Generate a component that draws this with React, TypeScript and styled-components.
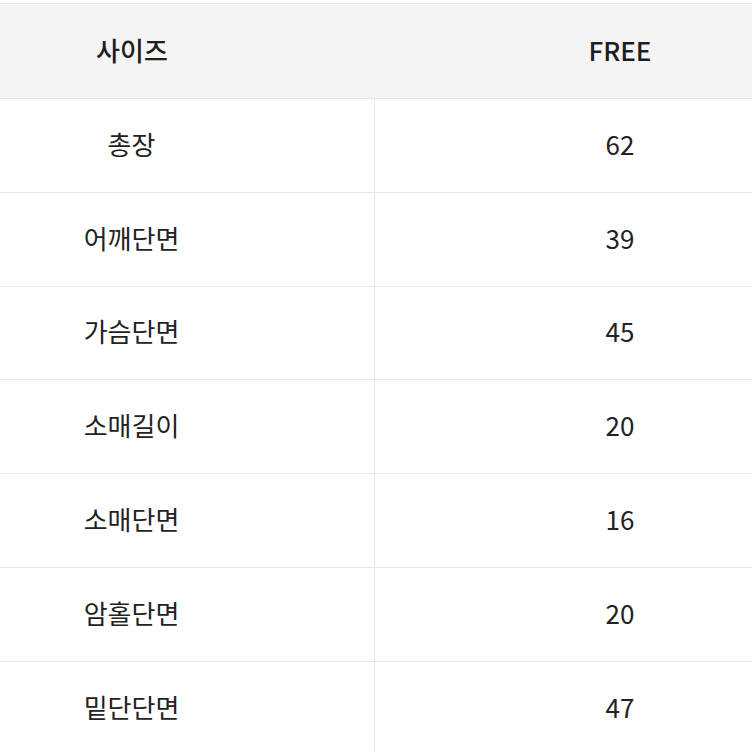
import React from 'react'
import styled, {createGlobalStyle} from 'styled-components'

const rows = [
    {label: '총장', value: '62'},
    {label: '어깨단면', value: '39'},
    {label: '가슴단면', value: '45'},
    {label: '소매길이', value: '20'},
    {label: '소매단면', value: '16'},
    {label: '암홀단면', value: '20'},
    {label: '밑단단면', value: '47'},
]

const GlobalStyle = createGlobalStyle`
  body {
    margin: 0;
    background: #fff;
    overflow: hidden;
    font-family: "Noto Sans CJK KR", "Noto Sans", sans-serif;
    color: #222;
  }
`

export default function App() {
    return (
        <>
            <GlobalStyle/>
            <Page>
                <Table>
                    <HeadRow>
                        <HeadCell>사이즈</HeadCell>
                        <HeadCell>FREE</HeadCell>
                    </HeadRow>
                    {rows.map((row, index) =>
                        <Row key={index}>
                            <LabelCell>{row.label}</LabelCell>
                            <ValueCell>{row.value}</ValueCell>
                        </Row>
                    )}
                </Table>
            </Page>
        </>
    )
}

const Page = styled.div`
  padding-top: 3px;
  height: 752px;
  overflow: hidden;
`

const Table = styled.div`
  width: 976px;
  margin-left: -111px;
  border-top: 1px solid #e4e4e4;
`

const HeadRow = styled.div`
  display: grid;
  grid-template-columns: 486px 1fr;
  height: 94px;
  background: #f4f4f4;
  border-bottom: 1.5px solid #e6e6e6;
`

const HeadCell = styled.div`
  display: flex;
  align-items: center;
  justify-content: center;
  padding-bottom: 4px;
  font-size: 26px;
  font-weight: 500;
  color: #1e1e1e;
`

const Row = styled.div`
  display: grid;
  grid-template-columns: 486px 1fr;
  height: 92.8px;
  border-bottom: 1.5px solid #e8e8e8;
`

const LabelCell = styled.div`
  display: flex;
  align-items: center;
  justify-content: center;
  padding-bottom: 4px;
  font-size: 26px;
  color: #222;
  border-right: 1.5px solid #e8e8e8;
`

const ValueCell = styled(LabelCell)`
  border-right: none;
`
